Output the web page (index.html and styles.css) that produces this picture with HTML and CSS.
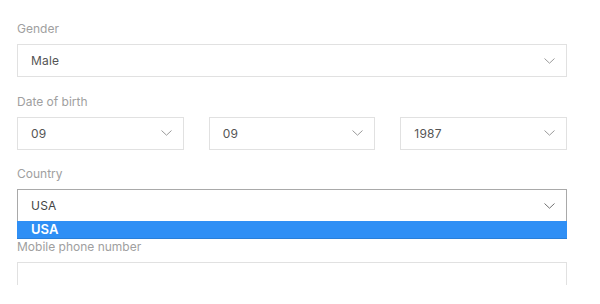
FILE: index.html
```html
<!DOCTYPE html>
<html>
<head>
<meta charset="utf-8">
<link rel="stylesheet" href="styles.css">
</head>
<body>
<div class="viewport">
  <form class="form">
    <div class="field">
      <div class="label">Gender</div>
      <div class="select">
        <span class="value">Male</span>
        <svg class="chev" width="11" height="6" viewBox="0 0 11 6"><path d="M0.5 0.5 L5.5 5.2 L10.5 0.5" fill="none" stroke="#9a9a9a" stroke-width="1"/></svg>
      </div>
    </div>
    <div class="field">
      <div class="label">Date of birth</div>
      <div class="row3">
        <div class="select">
          <span class="value">09</span>
          <svg class="chev" width="11" height="6" viewBox="0 0 11 6"><path d="M0.5 0.5 L5.5 5.2 L10.5 0.5" fill="none" stroke="#9a9a9a" stroke-width="1"/></svg>
        </div>
        <div class="select">
          <span class="value">09</span>
          <svg class="chev" width="11" height="6" viewBox="0 0 11 6"><path d="M0.5 0.5 L5.5 5.2 L10.5 0.5" fill="none" stroke="#9a9a9a" stroke-width="1"/></svg>
        </div>
        <div class="select">
          <span class="value">1987</span>
          <svg class="chev" width="11" height="6" viewBox="0 0 11 6"><path d="M0.5 0.5 L5.5 5.2 L10.5 0.5" fill="none" stroke="#9a9a9a" stroke-width="1"/></svg>
        </div>
      </div>
    </div>
    <div class="field">
      <div class="label">Country</div>
      <div class="dropdown-wrap">
        <div class="select open">
          <span class="value">USA</span>
          <svg class="chev" width="11" height="6" viewBox="0 0 11 6"><path d="M0.5 0.5 L5.5 5.2 L10.5 0.5" fill="none" stroke="#707070" stroke-width="1"/></svg>
        </div>
        <ul class="menu">
          <li class="option selected">USA</li>
        </ul>
      </div>
    </div>
    <div class="field">
      <div class="label">Mobile phone number</div>
      <div class="input"></div>
    </div>
  </form>
</div>
</body>
</html>
```

FILE: styles.css
```css
html, body {
  margin: 0;
  padding: 0;
  background: #fff;
}
body {
  font-family: "Inter", "Liberation Sans", sans-serif;
  font-size: 12px;
}
.viewport {
  height: 285px;
  overflow: hidden;
}
.form {
  width: 550px;
  padding: 21px 0 0 17px;
  display: flex;
  flex-direction: column;
  gap: 16.7px;
}
.label {
  color: #a0a0a0;
  font-size: 12px;
  line-height: 16px;
  margin-bottom: 7px;
}
.select {
  box-sizing: border-box;
  height: 33px;
  border: 1px solid #e1e1e1;
  display: flex;
  align-items: center;
  justify-content: space-between;
  padding: 0 11px 0 13px;
  background: #fff;
}
.value {
  color: #555;
  font-size: 12px;
  letter-spacing: 0.2px;
}
.chev {
  display: block;
}
.row3 {
  display: grid;
  grid-template-columns: repeat(3, 1fr);
  gap: 25px;
}
.dropdown-wrap {
  position: relative;
}
.select.open {
  border-color: #a9a9a9;
}
.select.open .value {
  color: #444;
}
.menu {
  position: absolute;
  left: 0;
  right: 0;
  top: 32px;
  margin: 0;
  padding: 0;
  list-style: none;
  z-index: 2;
}
.option {
  box-sizing: border-box;
  height: 18px;
  line-height: 17px;
  padding-left: 14px;
  font-size: 13px;
  font-weight: 600;
  color: #fff;
  background: #2f8ff5;
  border-bottom: 1px solid #2a7fd8;
}
.input {
  box-sizing: border-box;
  height: 33px;
  border: 1px solid #e1e1e1;
}
```
